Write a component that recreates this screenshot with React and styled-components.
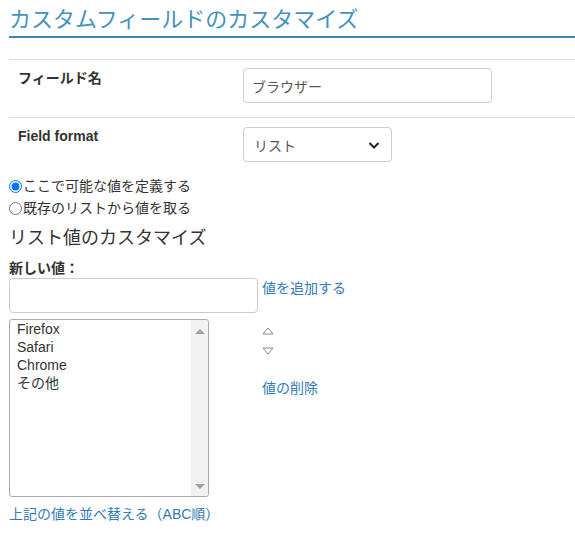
import React from 'react';
import styled, { createGlobalStyle } from 'styled-components';

const GlobalStyle = createGlobalStyle`
  body {
    margin: 0;
    background: #fff;
    color: #333;
    font-family: "Liberation Sans", "Noto Sans CJK JP", sans-serif;
    font-size: 14px;
  }
`;

const Page = styled.div`
  padding: 6px 0 0 9px;
`;

const Title = styled.h1`
  margin: 0;
  padding-bottom: 2px;
  font-size: 22px;
  font-weight: normal;
  line-height: 28px;
  color: #4592bd;
  border-bottom: 2px solid #3a88b2;
`;

const FieldTable = styled.div`
  margin-top: 21px;
`;

const Row = styled.div`
  display: grid;
  grid-template-columns: 234px 1fr;
  padding: 8px 0 14px;
  border-top: ${p => (p.$divider ? '1px solid #ddd' : 'none')};
`;

const Label = styled.div`
  padding-left: 9px;
  font-weight: bold;
  line-height: 20px;
`;

const TextInput = styled.input`
  box-sizing: border-box;
  width: ${p => p.$width}px;
  height: 35px;
  margin: 0;
  padding: 0 8px;
  border: 1px solid #ccc;
  border-radius: 4px;
  font-family: "Liberation Sans", "Noto Sans CJK JP", sans-serif;
  font-size: 14px;
  color: #555;
  outline: none;
`;

const SelectBox = styled.div`
  box-sizing: border-box;
  width: 149px;
  height: 35px;
  margin-top: 1px;
  padding: 0 10px;
  display: flex;
  align-items: center;
  justify-content: space-between;
  border: 1px solid #ccc;
  border-radius: 4px;
  color: #555;
`;

const RadioGroup = styled.div`
  margin-top: -1px;
  display: flex;
  flex-direction: column;
`;

const RadioLabel = styled.label`
  display: flex;
  align-items: center;
  height: 22px;
  line-height: 22px;
`;

const Radio = styled.input`
  margin: 0 1px 0 0;
  width: 13px;
  height: 13px;
`;

const SubTitle = styled.h2`
  margin: 7px 0 0;
  font-size: 18px;
  font-weight: normal;
  line-height: 24px;
  color: #333;
`;

const FieldLabel = styled.div`
  margin-top: 8px;
  font-weight: bold;
  line-height: 20px;
`;

const EditorGrid = styled.div`
  display: grid;
  grid-template-columns: 253px 1fr;
  row-gap: 6px;
`;

const Link = styled.a`
  color: #337ab7;
  text-decoration: none;
  line-height: 20px;
  cursor: pointer;
`;

const SideCol = styled.div`
  display: flex;
  flex-direction: column;
  align-items: flex-start;
  padding-top: ${p => p.$top || 0}px;
`;

const ListBox = styled.div`
  box-sizing: border-box;
  width: 200px;
  height: 178px;
  display: flex;
  border: 1px solid #aaa;
  border-radius: 3px;
  overflow: hidden;
`;

const Items = styled.div`
  flex: 1;
  padding: 0 0 0 7px;
`;

const Item = styled.div`
  line-height: 18px;
  color: #333;
`;

const ScrollTrack = styled.div`
  width: 17px;
  background: #f1f1f1;
  display: flex;
  flex-direction: column;
  justify-content: space-between;
  align-items: center;
  padding: 9px 0 7px;
`;

const Arrow = styled.div`
  width: 0;
  height: 0;
  border-left: 5px solid transparent;
  border-right: 5px solid transparent;
  ${p =>
    p.$down
      ? 'border-top: 5px solid #a3a3a3;'
      : 'border-bottom: 5px solid #a3a3a3;'}
`;

const MoveButtons = styled.div`
  display: flex;
  flex-direction: column;
  gap: 12px;
  margin-bottom: 23px;
`;

const Footer = styled.div`
  margin-top: 7px;
`;

function Chevron() {
  return (
    <svg width="14" height="14" viewBox="0 0 14 14">
      <path d="M2.5 5 L7 9.5 L11.5 5" fill="none" stroke="#222" strokeWidth="2" />
    </svg>
  );
}

function Tri({ down }) {
  return (
    <svg width="12" height="8" viewBox="0 0 12 8">
      <path
        d={down ? 'M1 1 L11 1 L6 7 Z' : 'M1 7 L11 7 L6 1 Z'}
        fill="none"
        stroke="#888"
        strokeWidth="1"
      />
    </svg>
  );
}

export default function App() {
  const values = ['Firefox', 'Safari', 'Chrome', 'その他'];

  return (
    <React.Fragment>
      <GlobalStyle />
      <Page>
        <Title>カスタムフィールドのカスタマイズ</Title>

        <FieldTable>
          <Row $divider>
            <Label>フィールド名</Label>
            <TextInput $width={249} defaultValue="ブラウザー" />
          </Row>
          <Row $divider>
            <Label>Field format</Label>
            <SelectBox>
              <span>リスト</span>
              <Chevron />
            </SelectBox>
          </Row>
        </FieldTable>

        <RadioGroup>
          <RadioLabel>
            <Radio type="radio" name="src" defaultChecked />
            ここで可能な値を定義する
          </RadioLabel>
          <RadioLabel>
            <Radio type="radio" name="src" />
            既存のリストから値を取る
          </RadioLabel>
        </RadioGroup>

        <SubTitle>リスト値のカスタマイズ</SubTitle>
        <FieldLabel>新しい値：</FieldLabel>

        <EditorGrid>
          <TextInput $width={249} />
          <SideCol $top={0}>
            <Link>値を追加する</Link>
          </SideCol>

          <ListBox>
            <Items>
              {values.map(v => (
                <Item key={v}>{v}</Item>
              ))}
            </Items>
            <ScrollTrack>
              <Arrow />
              <Arrow $down />
            </ScrollTrack>
          </ListBox>
          <SideCol $top={8}>
            <MoveButtons>
              <Tri />
              <Tri down />
            </MoveButtons>
            <Link>値の削除</Link>
          </SideCol>
        </EditorGrid>

        <Footer>
          <Link>上記の値を並べ替える（ABC順）</Link>
        </Footer>
      </Page>
    </React.Fragment>
  );
}
